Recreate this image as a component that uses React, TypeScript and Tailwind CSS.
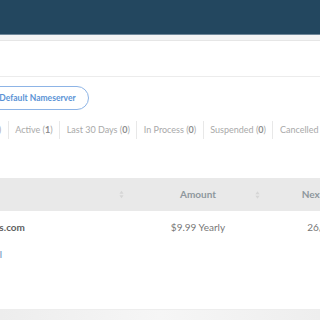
const TABS = [
  { label: 'All', count: 1 },
  { label: 'Active', count: 1 },
  { label: 'Last 30 Days', count: 0 },
  { label: 'In Process', count: 0 },
  { label: 'Suspended', count: 0 },
  { label: 'Cancelled', count: 0 },
];

function SortIcon() {
  return (
    <svg aria-hidden="true" width="5" height="9" viewBox="0 0 6 10" className="text-[#d6d6d6]">
      <path d="M3 0.5L5.5 4H0.5z" fill="currentColor" />
      <path d="M3 9.5L5.5 6H0.5z" fill="currentColor" />
    </svg>
  );
}

export default function App() {
  return (
    <div
      className="w-[320px] h-[320px] overflow-hidden bg-white flex flex-col"
      style={{ fontFamily: 'Lato, "Liberation Sans", sans-serif' }}
    >
      {/* Top navbar */}
      <div className="h-[35px] shrink-0 bg-[#23475f] border-b border-[#6f8799]" />
      <div className="h-[6px] shrink-0 bg-[#f4f4f4] border-b border-[#e6e6e6]" />
      {/* Page title bar */}
      <div className="h-[36px] shrink-0 bg-white border-b border-[#ececec]" />

      <div className="flex-1 flex flex-col">
        {/* Action button */}
        <div className="mt-[9px] flex -ml-[26px]">
          <button
            type="button"
            className="h-[24px] pl-[10px] pr-[12px] rounded-full border-[1.5px] border-[#8db4e6] text-[8.5px] font-bold text-[#5a93d6] leading-none whitespace-nowrap"
          >
            Set Default Nameserver
          </button>
        </div>

        {/* Filter tabs */}
        <div className="mt-[11px] flex items-center h-[18px] -ml-[28px] whitespace-nowrap">
          {TABS.map((t, i) => (
            <span
              key={t.label}
              className={`px-[6.5px] text-[9px] text-[#a9a9a9] leading-[18px] ${i > 0 ? 'border-l border-[#e8e8e8]' : ''}`}
            >
              {t.label} (<b className="font-bold text-[#8d8d8d]">{t.count}</b>)
            </span>
          ))}
        </div>

        {/* Table */}
        <div className="mt-[39px] -ml-[140px] w-[600px]">
          <div className="h-[33px] bg-[#e9e9e9] flex items-center text-[10px] font-bold text-[#8e979d]">
            <div className="w-[270px] flex items-center justify-between pl-[10px] pr-[6px]">
              <span>Product/Service</span>
              <SortIcon />
            </div>
            <div className="w-[136px] flex items-center justify-center relative">
              <span>Amount</span>
              <span className="absolute right-[6px] top-1/2 -translate-y-1/2 flex">
                <SortIcon />
              </span>
            </div>
            <div className="w-[130px] text-center pl-[8px]">Next Due Date</div>
          </div>
          <div className="h-[33px] flex items-center text-[10px]">
            <div className="w-[165px] text-right font-bold text-[#5f5f5f] whitespace-nowrap">whmcsthemes.com</div>
            <div className="w-[105px]" />
            <div className="w-[136px] text-center text-[#777]">$9.99 Yearly</div>
            <div className="w-[130px] text-center pl-[8px] text-[#777]">26/05/2025</div>
          </div>
          <div className="mt-[4px] w-[142px] text-right text-[9px] text-[#7fa3c8] font-bold whitespace-nowrap">
            Hosting Panel
          </div>
        </div>
      </div>

      {/* Footer */}
      <div className="h-[11px] shrink-0 border-t border-[#ededed] bg-gradient-to-r from-[#ededed] via-[#f6f6f6] to-[#eeeeee]" />
    </div>
  );
}
